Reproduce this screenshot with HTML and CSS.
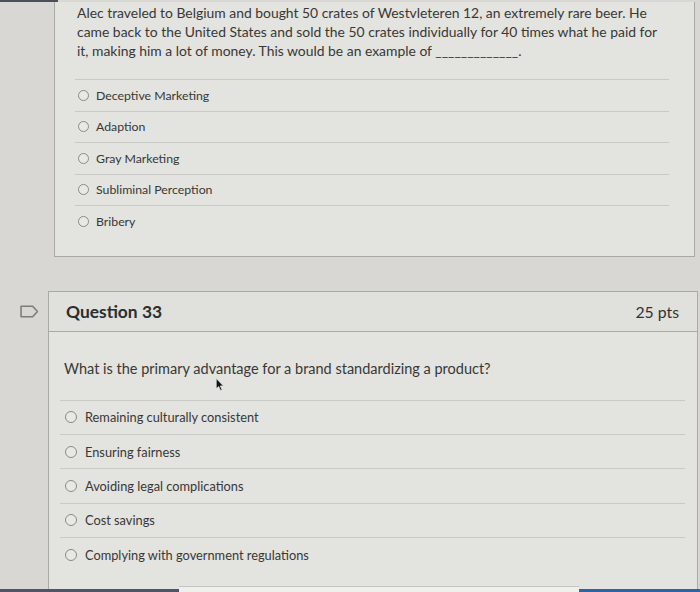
FILE: index.html
```html
<!DOCTYPE html>
<html lang="en">
<head>
  <meta charset="UTF-8">
  <meta name="viewport" content="width=device-width, initial-scale=1.0">
  <title>Quiz</title>
  <link rel="stylesheet" href="styles.css">
</head>
<body>
  <div class="top-strip"></div>

  <!-- Previous question (scrolled partly out of view) -->
  <div class="card card-prev">
    <div class="question-text">
      Alec traveled to Belgium and bought 50 crates of Westvleteren 12, an extremely rare beer. He came back to the United States and sold the 50 crates individually for 40 times what he paid for it, making him a lot of money. This would be an example of <span class="blank">_____________</span>.
    </div>
    <div class="answers">
      <label class="answer"><span class="radio"></span>Deceptive Marketing</label>
      <label class="answer"><span class="radio"></span>Adaption</label>
      <label class="answer"><span class="radio"></span>Gray Marketing</label>
      <label class="answer"><span class="radio"></span>Subliminal Perception</label>
      <label class="answer"><span class="radio"></span>Bribery</label>
    </div>
  </div>

  <!-- Question 33 -->
  <div class="question-row">
    <div class="flag-col">
      <svg class="flag" viewBox="0 0 18 12" width="19" height="13">
        <path d="M1 1 H12 L16.5 6 L12 11 H1 Z" fill="none" stroke="#7d7d7a" stroke-width="1.5" stroke-linejoin="round"/>
      </svg>
    </div>
    <div class="card card-current">
      <div class="card-header">
        <h2>Question 33</h2>
        <span class="pts">25 pts</span>
      </div>
      <div class="card-body">
        <div class="question-text">What is the primary advantage for a brand standardizing a product?</div>
        <svg class="cursor" viewBox="0 0 8 12" width="9" height="13">
          <path d="M1 0.5 L1 10 L3.2 7.8 L5 11.5 L6.4 10.8 L4.7 7.3 L7.6 7.3 Z" fill="#111" stroke="#eee" stroke-width="0.6"/>
        </svg>
        <div class="answers">
          <label class="answer"><span class="radio"></span>Remaining culturally consistent</label>
          <label class="answer"><span class="radio"></span>Ensuring fairness</label>
          <label class="answer"><span class="radio"></span>Avoiding legal complications</label>
          <label class="answer"><span class="radio"></span>Cost savings</label>
          <label class="answer"><span class="radio"></span>Complying with government regulations</label>
        </div>
      </div>
    </div>
  </div>

  <div class="footer-bar">
    <div class="fb-left"></div>
    <div class="fb-mid"></div>
    <div class="fb-right"></div>
  </div>
</body>
</html>
```

FILE: styles.css
```css
* {
  margin: 0;
  padding: 0;
  box-sizing: border-box;
}

body {
  font-family: Lato, "Open Sans", sans-serif;
  background-color: #d8d7d3;
  color: #383836;
  height: 592px;
  overflow: hidden;
}

.top-strip {
  width: 58px;
  height: 2px;
  background: #4a4f5a;
}

.card {
  background: #e3e3df;
  border: 1px solid #a9a9a5;
}

/* Previous question card */
.card-prev {
  margin-left: 54px;
  width: 641px;
  border-top: none;
  padding: 0 25px 19px 20px;
}

.card-prev .question-text {
  width: 588px;
  padding: 1px 0 0 2px;
  font-size: 13.9px;
  line-height: 19px;
}

.card-prev .answers {
  margin-top: 19px;
}

.answer {
  display: flex;
  align-items: center;
  border-top: 1px solid #c9c9c5;
  cursor: pointer;
}

.card-prev .answer {
  height: 31.5px;
  font-size: 12.3px;
}

.radio {
  flex: 0 0 auto;
  width: 11px;
  height: 11px;
  border: 1px solid #8a8a87;
  border-radius: 50%;
  background: #e8e8e4;
}

.card-prev .radio {
  margin: 0 7px 0 3px;
}

/* Current question */
.question-row {
  display: flex;
  margin-top: 34px;
}

.flag-col {
  flex: 0 0 48px;
  padding: 14px 0 0 20px;
}

.flag {
  display: block;
}

.card-current {
  width: 650px;
  height: 320px;
}

.card-header {
  display: flex;
  justify-content: space-between;
  align-items: center;
  height: 40px;
  padding: 0 18px 0 17px;
  border-bottom: 1px solid #a9a9a5;
  background: #e0e0dc;
}

.card-header h2 {
  font-size: 17.4px;
  font-weight: bold;
  color: #2d2d2c;
}

.pts {
  font-size: 15.8px;
  color: #333332;
}

.card-body {
  position: relative;
  padding: 27px 12px 0 11px;
}

.card-body .question-text {
  padding-left: 4px;
  font-size: 14.5px;
  line-height: 20px;
}

.cursor {
  position: absolute;
  left: 166px;
  top: 46px;
}

.card-body .answers {
  margin-top: 21px;
}

.card-body .answer {
  height: 34.4px;
  font-size: 12.8px;
}

.card-body .radio {
  width: 12px;
  height: 12px;
  margin: 0 8px 0 5px;
}

/* Bottom toolbar peeking in */
.footer-bar {
  position: fixed;
  left: 0;
  right: 0;
  bottom: 0;
  height: 6px;
  display: flex;
  align-items: flex-end;
}

.fb-left {
  width: 179px;
  height: 3px;
  background: #4f5565;
}

.fb-mid {
  width: 400px;
  height: 6px;
  background: #efefec;
  border-top: 1px solid #c4c4c0;
}

.fb-right {
  flex: 1;
  height: 3px;
  background: #2e63a6;
}
```
